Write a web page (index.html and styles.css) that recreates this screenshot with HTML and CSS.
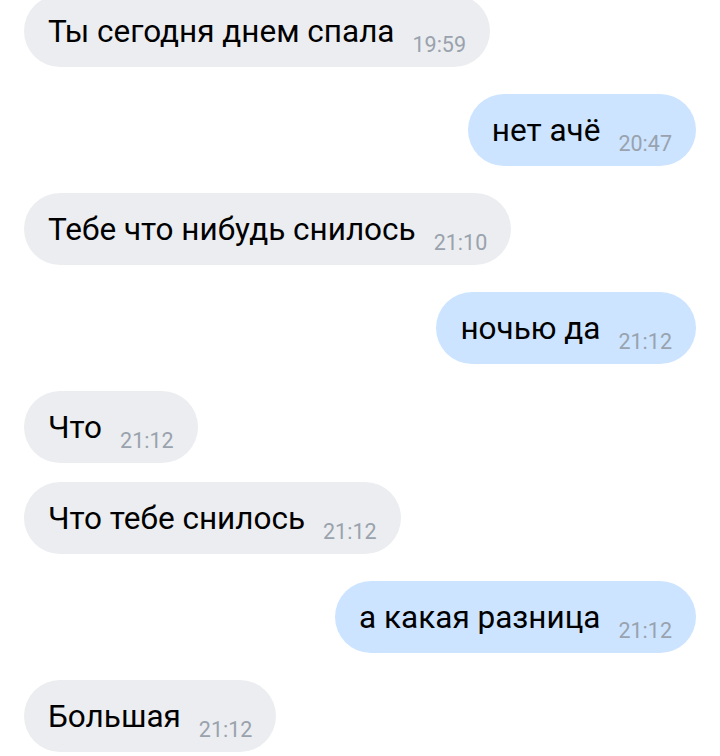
FILE: index.html
```html
<!DOCTYPE html>
<html lang="ru">
<head>
    <meta charset="UTF-8">
    <meta name="viewport" content="width=device-width, initial-scale=1.0">
    <title>Сообщения</title>
    <link rel="stylesheet" href="styles.css">
</head>
<body>
    <div id="chat">
        <div class="msg in"><span class="text">Ты сегодня днем спала</span><span class="time">19:59</span></div>
        <div class="msg out"><span class="text">нет ачё</span><span class="time">20:47</span></div>
        <div class="msg in"><span class="text">Тебе что нибудь снилось</span><span class="time">21:10</span></div>
        <div class="msg out"><span class="text">ночью да</span><span class="time">21:12</span></div>
        <div class="msg in"><span class="text">Что</span><span class="time">21:12</span></div>
        <div class="msg in same"><span class="text">Что тебе снилось</span><span class="time">21:12</span></div>
        <div class="msg out"><span class="text">а какая разница</span><span class="time">21:12</span></div>
        <div class="msg in"><span class="text">Большая</span><span class="time">21:12</span></div>
    </div>
</body>
</html>
```

FILE: styles.css
```css
body {
    margin: 0;
    background: #fff;
    font-family: Roboto, "Noto Sans", sans-serif;
}
#chat {
    display: flex;
    flex-direction: column;
    padding: 0 24px;
    margin-top: -5px;
}
.msg {
    display: flex;
    align-items: baseline;
    gap: 18px;
    height: 72px;
    box-sizing: border-box;
    padding: 0 24px 0 24px;
    border-radius: 36px;
    margin-top: 27px;
    line-height: 72px;
    align-self: flex-start;
}
.msg:first-child {
    margin-top: 0;
}
.msg.same {
    margin-top: 19px;
}
.in {
    background: #ebedf0;
}
.out {
    background: #cce4ff;
    align-self: flex-end;
}
.text {
    font-size: 31.5px;
    color: #000;
    position: relative;
    top: 1px;
}
.time {
    font-size: 21.5px;
    color: #99a2ad;
    position: relative;
    top: 11px;
}
```
